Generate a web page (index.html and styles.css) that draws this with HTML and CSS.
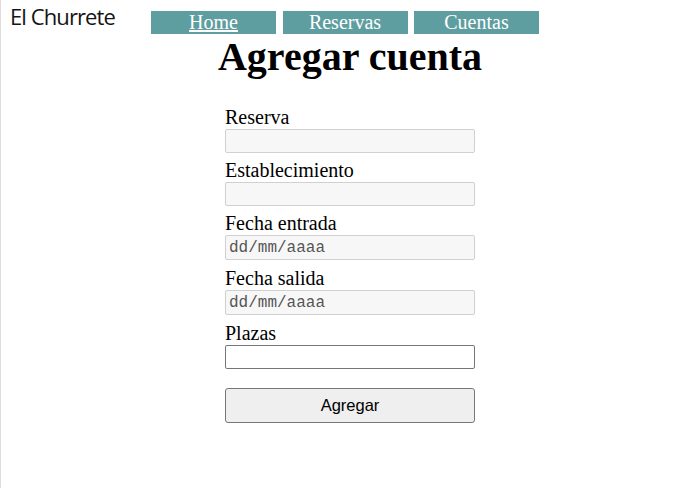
FILE: index.html
```html
<!DOCTYPE html>
<html lang="es">
<head>
<meta charset="utf-8">
<title>Agregar cuenta</title>
<link rel="stylesheet" href="styles.css">
</head>
<body>
<div class="page">
  <header class="top">
    <div class="brand">El Churrete</div>
    <nav class="nav">
      <a class="nav-link nav-link-current" href="#">Home</a>
      <a class="nav-link" href="#">Reservas</a>
      <a class="nav-link" href="#">Cuentas</a>
    </nav>
  </header>
  <main class="main">
    <h1 class="title">Agregar cuenta</h1>
    <form class="form">
      <div class="field">
        <label class="label" for="reserva">Reserva</label>
        <input class="input input-ro" id="reserva" type="text" readonly>
      </div>
      <div class="field">
        <label class="label" for="est">Establecimiento</label>
        <input class="input input-ro" id="est" type="text" readonly>
      </div>
      <div class="field field-date">
        <label class="label" for="entrada">Fecha entrada</label>
        <input class="input input-ro input-date" id="entrada" type="text" placeholder="dd/mm/aaaa" readonly>
      </div>
      <div class="field field-date">
        <label class="label" for="salida">Fecha salida</label>
        <input class="input input-ro input-date" id="salida" type="text" placeholder="dd/mm/aaaa" readonly>
      </div>
      <div class="field">
        <label class="label" for="plazas">Plazas</label>
        <input class="input input-edit" id="plazas" type="text">
      </div>
      <button class="submit" type="button">Agregar</button>
    </form>
  </main>
</div>
</body>
</html>
```
FILE: styles.css
```css
html, body {
  margin: 0;
  padding: 0;
  background: #ffffff;
}

.page {
  min-height: 488px;
  box-sizing: border-box;
  border-left: 1px solid #dcdcdc;
  font-family: "Liberation Serif", "Times New Roman", serif;
  color: #000;
}

.top {
  display: flex;
  align-items: flex-start;
  height: 34px;
}

.brand {
  flex: 0 0 150px;
  box-sizing: border-box;
  padding: 1px 0 0 9px;
  font-family: "Open Sans", "Liberation Sans", sans-serif;
  font-size: 22px;
  letter-spacing: -0.9px;
  line-height: 30px;
  color: #141414;
  white-space: nowrap;
}

.nav {
  display: flex;
  gap: 6.5px;
  padding-top: 11px;
}

.nav-link {
  display: block;
  width: 125px;
  height: 23px;
  box-sizing: border-box;
  background: #5f9ea0;
  color: #ffffff;
  text-align: center;
  font-size: 20px;
  line-height: 22px;
  text-decoration: none;
}

.nav-link-current {
  text-decoration: underline;
}

.main {
  display: flex;
  flex-direction: column;
  align-items: center;
  padding-left: 5px;
}

.title {
  margin: 0;
  font-size: 40px;
  line-height: 46px;
  font-weight: bold;
  white-space: nowrap;
}

.form {
  width: 250px;
  margin-top: 26px;
  display: flex;
  flex-direction: column;
}

.field {
  display: flex;
  flex-direction: column;
}

.field + .field {
  margin-top: 6px;
}

.field-date {
  padding-bottom: 1px;
}

.label {
  font-size: 20px;
  line-height: 23px;
}

.input {
  display: block;
  width: 250px;
  height: 24px;
  margin: 0;
  box-sizing: border-box;
  border-radius: 2px;
  outline: none;
  font-family: "Liberation Mono", monospace;
  font-size: 16px;
  padding: 0 3px;
}

.input-ro {
  background: #f7f7f7;
  border: 1px solid #d0d0d0;
}

.input-date {
  height: 25px;
}

.input-date::placeholder {
  color: #555555;
  opacity: 1;
}

.input-edit {
  background: #ffffff;
  border: 1px solid #767676;
}

.submit {
  margin-top: 19px;
  width: 250px;
  height: 35px;
  box-sizing: border-box;
  background: #efefef;
  border: 1px solid #767676;
  border-radius: 3px;
  font-family: "Liberation Sans", Arial, sans-serif;
  font-size: 16.5px;
  color: #000;
  padding: 0;
}
```
